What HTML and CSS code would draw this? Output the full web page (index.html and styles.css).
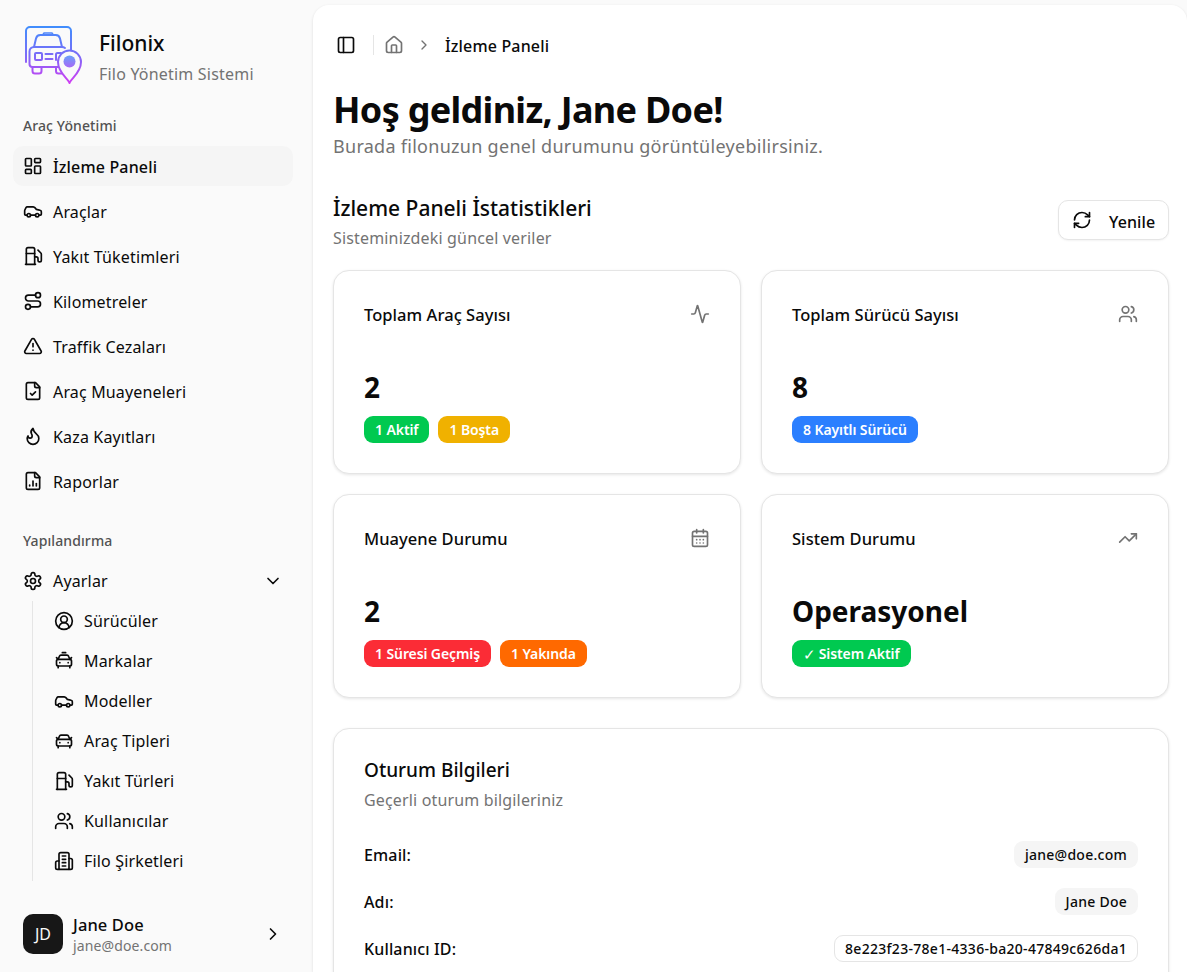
FILE: index.html
```html
<!DOCTYPE html>
<html lang="tr">
<head>
<meta charset="utf-8">
<title>Filonix</title>
<link rel="stylesheet" href="styles.css">
</head>
<body>
<svg class="sprite" width="0" height="0" aria-hidden="true">
  <defs>
    <symbol id="i-panel" viewBox="0 0 24 24"><rect x="3" y="3" width="18" height="18" rx="2"/><path d="M9 3v18"/></symbol>
    <symbol id="i-home" viewBox="0 0 24 24"><path d="M15 21v-8a1 1 0 0 0-1-1h-4a1 1 0 0 0-1 1v8"/><path d="M3 10a2 2 0 0 1 .709-1.528l7-5.999a2 2 0 0 1 2.582 0l7 5.999A2 2 0 0 1 21 10v9a2 2 0 0 1-2 2H5a2 2 0 0 1-2-2z"/></symbol>
    <symbol id="i-right" viewBox="0 0 24 24"><path d="m9 18 6-6-6-6"/></symbol>
    <symbol id="i-down" viewBox="0 0 24 24"><path d="m6 9 6 6 6-6"/></symbol>
    <symbol id="i-dash" viewBox="0 0 24 24"><rect x="3" y="3" width="7" height="9" rx="1"/><rect x="14" y="3" width="7" height="5" rx="1"/><rect x="14" y="12" width="7" height="9" rx="1"/><rect x="3" y="16" width="7" height="5" rx="1"/></symbol>
    <symbol id="i-car" viewBox="0 0 24 24"><path d="M19 17h2c.6 0 1-.4 1-1v-3c0-.9-.7-1.700-1.500-1.900C18.700 10.600 16 10 16 10s-1.300-1.400-2.200-2.300c-.5-.4-1.100-.7-1.800-.7H5c-.6 0-1.100.4-1.400.9l-1.400 2.900A3.700 3.700 0 0 0 2 12v4c0 .6.4 1 1 1h2"/><circle cx="7" cy="17" r="2"/><path d="M9 17h6"/><circle cx="17" cy="17" r="2"/></symbol>
    <symbol id="i-fuel" viewBox="0 0 24 24"><path d="M3 22h12"/><path d="M4 9h10"/><path d="M14 22V4a2 2 0 0 0-2-2H6a2 2 0 0 0-2 2v18"/><path d="M14 13h2a2 2 0 0 1 2 2v2a2 2 0 0 0 2 2a2 2 0 0 0 2-2V9.830a2 2 0 0 0-.59-1.420L18 5"/></symbol>
    <symbol id="i-route" viewBox="0 0 24 24"><circle cx="6" cy="19" r="3"/><path d="M9 19h8.500a3.500 3.500 0 0 0 0-7h-11a3.500 3.500 0 0 1 0-7H15"/><circle cx="18" cy="5" r="3"/></symbol>
    <symbol id="i-alert" viewBox="0 0 24 24"><path d="m21.730 18-8-14a2 2 0 0 0-3.480 0l-8 14A2 2 0 0 0 4 21h16a2 2 0 0 0 1.730-3"/><path d="M12 9v4"/><path d="M12 17h.01"/></symbol>
    <symbol id="i-filecheck" viewBox="0 0 24 24"><path d="M15 2H6a2 2 0 0 0-2 2v16a2 2 0 0 0 2 2h12a2 2 0 0 0 2-2V7Z"/><path d="M14 2v4a2 2 0 0 0 2 2h4"/><path d="m9 15 2 2 4-4"/></symbol>
    <symbol id="i-flame" viewBox="0 0 24 24"><path d="M8.500 14.500A2.500 2.500 0 0 0 11 12c0-1.380-.5-2-1-3-1.072-2.143-.224-4.054 2-6 .5 2.500 2 4.900 4 6.500 2 1.600 3 3.500 3 5.500a7 7 0 1 1-14 0c0-1.153.433-2.294 1-3a2.500 2.500 0 0 0 2.500 2.500z"/></symbol>
    <symbol id="i-filechart" viewBox="0 0 24 24"><path d="M15 2H6a2 2 0 0 0-2 2v16a2 2 0 0 0 2 2h12a2 2 0 0 0 2-2V7Z"/><path d="M14 2v4a2 2 0 0 0 2 2h4"/><path d="M8 18v-1"/><path d="M12 18v-6"/><path d="M16 18v-3"/></symbol>
    <symbol id="i-gear" viewBox="0 0 24 24"><path d="M12.220 2h-.44a2 2 0 0 0-2 2v.18a2 2 0 0 1-1 1.730l-.43.25a2 2 0 0 1-2 0l-.15-.08a2 2 0 0 0-2.730.73l-.22.38a2 2 0 0 0 .73 2.730l.15.1a2 2 0 0 1 1 1.720v.51a2 2 0 0 1-1 1.740l-.15.09a2 2 0 0 0-.73 2.730l.22.38a2 2 0 0 0 2.730.73l.15-.08a2 2 0 0 1 2 0l.43.25a2 2 0 0 1 1 1.730V20a2 2 0 0 0 2 2h.44a2 2 0 0 0 2-2v-.18a2 2 0 0 1 1-1.730l.43-.25a2 2 0 0 1 2 0l.15.08a2 2 0 0 0 2.730-.73l.22-.39a2 2 0 0 0-.73-2.730l-.15-.08a2 2 0 0 1-1-1.740v-.5a2 2 0 0 1 1-1.740l.15-.09a2 2 0 0 0 .73-2.730l-.22-.38a2 2 0 0 0-2.730-.73l-.15.08a2 2 0 0 1-2 0l-.43-.25a2 2 0 0 1-1-1.730V4a2 2 0 0 0-2-2z"/><circle cx="12" cy="12" r="3"/></symbol>
    <symbol id="i-usercircle" viewBox="0 0 24 24"><path d="M18 20a6 6 0 0 0-12 0"/><circle cx="12" cy="10" r="4"/><circle cx="12" cy="12" r="10"/></symbol>
    <symbol id="i-taxi" viewBox="0 0 24 24"><path d="M10 2h4"/><path d="m21 8-2 2-1.500-3.700A2 2 0 0 0 15.646 5H8.400a2 2 0 0 0-1.903 1.257L5 10 3 8"/><path d="M7 14h.01"/><path d="M17 14h.01"/><rect x="3" y="10" width="18" height="8" rx="2"/><path d="M5 18v2"/><path d="M19 18v2"/></symbol>
    <symbol id="i-carfront" viewBox="0 0 24 24"><path d="m21 8-2 2-1.500-3.700A2 2 0 0 0 15.646 5H8.400a2 2 0 0 0-1.903 1.257L5 10 3 8"/><path d="M7 14h.01"/><path d="M17 14h.01"/><rect x="3" y="10" width="18" height="8" rx="2"/><path d="M5 18v2"/><path d="M19 18v2"/></symbol>
    <symbol id="i-users" viewBox="0 0 24 24"><path d="M16 21v-2a4 4 0 0 0-4-4H6a4 4 0 0 0-4 4v2"/><path d="M16 3.128a4 4 0 0 1 0 7.744"/><path d="M22 21v-2a4 4 0 0 0-3-3.870"/><circle cx="9" cy="7" r="4"/></symbol>
    <symbol id="i-building" viewBox="0 0 24 24"><path d="M6 22V4a2 2 0 0 1 2-2h8a2 2 0 0 1 2 2v18Z"/><path d="M6 12H4a2 2 0 0 0-2 2v6a2 2 0 0 0 2 2h2"/><path d="M18 9h2a2 2 0 0 1 2 2v9a2 2 0 0 1-2 2h-2"/><path d="M10 6h4"/><path d="M10 10h4"/><path d="M10 14h4"/><path d="M10 18h4"/></symbol>
    <symbol id="i-activity" viewBox="0 0 24 24"><path d="M22 12h-2.480a2 2 0 0 0-1.930 1.460l-2.350 8.360a.25.25 0 0 1-.48 0L9.240 2.180a.25.25 0 0 0-.48 0l-2.350 8.360A2 2 0 0 1 4.490 12H2"/></symbol>
    <symbol id="i-calendar" viewBox="0 0 24 24"><path d="M8 2v4"/><path d="M16 2v4"/><rect x="3" y="4" width="18" height="18" rx="2"/><path d="M3 10h18"/><path d="M8 14h.01"/><path d="M12 14h.01"/><path d="M16 14h.01"/><path d="M8 18h.01"/><path d="M12 18h.01"/><path d="M16 18h.01"/></symbol>
    <symbol id="i-trend" viewBox="0 0 24 24"><path d="M16 7h6v6"/><path d="m22 7-8.500 8.500-5-5L2 17"/></symbol>
    <symbol id="i-refresh" viewBox="0 0 24 24"><path d="M3 12a9 9 0 0 1 9-9 9.750 9.750 0 0 1 6.740 2.740L21 8"/><path d="M21 3v5h-5"/><path d="M21 12a9 9 0 0 1-9 9 9.750 9.750 0 0 1-6.740-2.740L3 16"/><path d="M8 16H3v5"/></symbol>
  </defs>
</svg>

<div class="app">
  <aside class="sidebar">
    <header class="brand">
      <svg class="logo" viewBox="0 0 60 58" fill="none" aria-hidden="true">
        <defs>
          <linearGradient id="logo-grad" gradientUnits="userSpaceOnUse" x1="0" y1="0" x2="0" y2="58">
            <stop offset="0" stop-color="#3f8efc"/>
            <stop offset=".5" stop-color="#7a6cf8"/>
            <stop offset="1" stop-color="#d23cf2"/>
          </linearGradient>
          <linearGradient id="pin-grad" x1="0" y1="0" x2="0" y2="1">
            <stop offset="0" stop-color="#6aa0fa"/>
            <stop offset="1" stop-color="#a868f6"/>
          </linearGradient>
        </defs>
        <g stroke="url(#logo-grad)" stroke-width="2" stroke-linejoin="round" stroke-linecap="round">
          <path d="M2 36V5a4 4 0 0 1 4-4h37a4 4 0 0 1 4 4v19"/>
          <path d="M10 21l2-8.500A4.500 4.500 0 0 1 16.300 9h15.400a4.500 4.500 0 0 1 4.300 3.500L38 21"/>
          <path d="M19 8.500l1-1.500h8l1 1.500" stroke-width="1.500"/>
          <path d="M38 21H10a4.500 4.500 0 0 0-4.500 4.500V38A3 3 0 0 0 8.500 41H36M38 21a5 5 0 0 1 3 1"/>
          <rect x="11" y="27" width="7" height="7" rx="1"/>
          <path d="M21.500 28h7M21.500 33h7"/>
          <path d="M32 34V28.500a1.500 1.500 0 0 1 1.500-1.500H37"/>
          <path d="M8.500 41v4a2.500 2.500 0 0 0 2.500 2.500h4a2.500 2.500 0 0 0 2.500-2.500v-4"/>
          <path d="M32 41v4a2.500 2.500 0 0 0 2.500 2.500H38"/>
          <path d="M45.500 57c-1-4-11.500-10-11.500-21a11.500 11.500 0 0 1 23 0c0 11-10.500 17-11.500 21z" fill="#fafafa"/>
        </g>
        <circle cx="45.500" cy="35.500" r="6" fill="url(#pin-grad)"/>
      </svg>
      <div class="brand-text">
        <div class="brand-name">Filonix</div>
        <div class="brand-sub">Filo Yönetim Sistemi</div>
      </div>
    </header>

    <div class="group-label">Araç Yönetimi</div>
    <nav class="nav">
      <a class="nav-item active"><svg class="icon"><use href="#i-dash"/></svg><span>İzleme Paneli</span></a>
      <a class="nav-item"><svg class="icon"><use href="#i-car"/></svg><span>Araçlar</span></a>
      <a class="nav-item"><svg class="icon"><use href="#i-fuel"/></svg><span>Yakıt Tüketimleri</span></a>
      <a class="nav-item"><svg class="icon"><use href="#i-route"/></svg><span>Kilometreler</span></a>
      <a class="nav-item"><svg class="icon"><use href="#i-alert"/></svg><span>Traffik Cezaları</span></a>
      <a class="nav-item"><svg class="icon"><use href="#i-filecheck"/></svg><span>Araç Muayeneleri</span></a>
      <a class="nav-item"><svg class="icon"><use href="#i-flame"/></svg><span>Kaza Kayıtları</span></a>
      <a class="nav-item"><svg class="icon"><use href="#i-filechart"/></svg><span>Raporlar</span></a>
    </nav>

    <div class="group-label second">Yapılandırma</div>
    <div class="nav-item parent"><svg class="icon"><use href="#i-gear"/></svg><span>Ayarlar</span><svg class="icon chevron"><use href="#i-down"/></svg></div>
    <div class="subnav">
      <a class="sub-item"><svg class="icon"><use href="#i-usercircle"/></svg><span>Sürücüler</span></a>
      <a class="sub-item"><svg class="icon"><use href="#i-taxi"/></svg><span>Markalar</span></a>
      <a class="sub-item"><svg class="icon"><use href="#i-car"/></svg><span>Modeller</span></a>
      <a class="sub-item"><svg class="icon"><use href="#i-carfront"/></svg><span>Araç Tipleri</span></a>
      <a class="sub-item"><svg class="icon"><use href="#i-fuel"/></svg><span>Yakıt Türleri</span></a>
      <a class="sub-item"><svg class="icon"><use href="#i-users"/></svg><span>Kullanıcılar</span></a>
      <a class="sub-item"><svg class="icon"><use href="#i-building"/></svg><span>Filo Şirketleri</span></a>
    </div>

    <footer class="user">
      <div class="avatar">JD</div>
      <div class="user-text">
        <div class="user-name">Jane Doe</div>
        <div class="user-mail">jane@doe.com</div>
      </div>
      <svg class="icon chevron"><use href="#i-right"/></svg>
    </footer>
  </aside>

  <main class="main">
    <div class="crumbs">
      <svg class="icon"><use href="#i-panel"/></svg>
      <span class="crumb-sep"></span>
      <svg class="icon muted"><use href="#i-home"/></svg>
      <svg class="icon small muted crumb-arrow"><use href="#i-right"/></svg>
      <span class="crumb-current">İzleme Paneli</span>
    </div>

    <h1 class="title">Hoş geldiniz, Jane Doe!</h1>
    <p class="subtitle">Burada filonuzun genel durumunu görüntüleyebilirsiniz.</p>

    <div class="section-head">
      <div>
        <h2 class="section-title">İzleme Paneli İstatistikleri</h2>
        <p class="section-sub">Sisteminizdeki güncel veriler</p>
      </div>
      <button class="refresh"><svg class="icon"><use href="#i-refresh"/></svg><span>Yenile</span></button>
    </div>

    <div class="stats">
      <section class="card">
        <div class="card-head"><h3>Toplam Araç Sayısı</h3><svg class="icon muted"><use href="#i-activity"/></svg></div>
        <div class="value">2</div>
        <div class="badges"><span class="badge green">1 Aktif</span><span class="badge yellow">1 Boşta</span></div>
      </section>
      <section class="card">
        <div class="card-head"><h3>Toplam Sürücü Sayısı</h3><svg class="icon muted"><use href="#i-users"/></svg></div>
        <div class="value">8</div>
        <div class="badges"><span class="badge blue">8 Kayıtlı Sürücü</span></div>
      </section>
      <section class="card">
        <div class="card-head"><h3>Muayene Durumu</h3><svg class="icon muted"><use href="#i-calendar"/></svg></div>
        <div class="value">2</div>
        <div class="badges"><span class="badge red">1 Süresi Geçmiş</span><span class="badge orange">1 Yakında</span></div>
      </section>
      <section class="card">
        <div class="card-head"><h3>Sistem Durumu</h3><svg class="icon muted"><use href="#i-trend"/></svg></div>
        <div class="value">Operasyonel</div>
        <div class="badges"><span class="badge green"><span class="tick">✓</span> Sistem Aktif</span></div>
      </section>
    </div>

    <section class="card session">
      <h3 class="session-title">Oturum Bilgileri</h3>
      <p class="session-sub">Geçerli oturum bilgileriniz</p>
      <div class="rows">
        <div class="row"><span class="row-label">Email:</span><span class="pill">jane@doe.com</span></div>
        <div class="row"><span class="row-label">Adı:</span><span class="pill">Jane Doe</span></div>
        <div class="row"><span class="row-label">Kullanıcı ID:</span><span class="pill outline">8e223f23-78e1-4336-ba20-47849c626da1</span></div>
      </div>
    </section>
  </main>
</div>
</body>
</html>
```

FILE: styles.css
```css
* { box-sizing: border-box; }
html, body { height: 100%; margin: 0; overflow: hidden; }
body {
  font-family: "Noto Sans", "Open Sans", sans-serif;
  color: #0a0a0a;
  background: #fafafa;
  font-size: 16px;
}
.sprite { position: absolute; }
h1, h2, h3, p { margin: 0; font-weight: inherit; }

.icon {
  width: 20px;
  height: 20px;
  flex: none;
  fill: none;
  stroke: currentColor;
  stroke-width: 2;
  stroke-linecap: round;
  stroke-linejoin: round;
}
.icon.small { width: 16px; height: 16px; }
.icon.muted { color: #737373; }

.app { display: flex; height: 972px; }

/* Sidebar */
.sidebar {
  width: 313px;
  flex: none;
  display: flex;
  flex-direction: column;
  padding: 26px 20px 18px 13px;
}
.brand { display: flex; align-items: center; padding-left: 11px; gap: 15px; height: 58px; }
.logo { width: 60px; height: 58px; flex: none; }
.brand-name { font-size: 21px; font-weight: 500; line-height: 30px; margin-top: 3px; }
.brand-sub { font-size: 16px; color: #737373; line-height: 24px; margin-top: 4px; letter-spacing: .2px; }

.group-label { font-size: 14px; font-weight: 500; color: #525252; padding-left: 10px; margin-top: 32px; line-height: 20px; letter-spacing: .1px; }
.group-label.second { margin-top: 30px; }
.nav { display: flex; flex-direction: column; gap: 5px; margin-top: 10px; }
.nav-item {
  display: flex;
  align-items: center;
  gap: 10px;
  height: 40px;
  padding: 0 10px;
  border-radius: 10px;
  font-size: 16px;
  letter-spacing: .16px;
}
.nav > .nav-item > span { padding-top: 2px; }
.nav-item.active { background: #f5f5f5; font-weight: 500; }
.nav-item.parent { margin-top: 10px; }
.chevron { margin-left: auto; }
.subnav {
  display: flex;
  flex-direction: column;
  margin-left: 19px;
  border-left: 1px solid #e5e5e5;
  padding-left: 21px;
}
.sub-item { display: flex; align-items: center; gap: 10px; height: 40px; font-size: 16px; letter-spacing: .16px; }

.user { display: flex; align-items: center; gap: 10px; height: 40px; padding: 0 10px; margin-top: auto; }
.avatar {
  width: 40px;
  height: 40px;
  border-radius: 10px;
  background: #171717;
  color: #fafafa;
  display: flex;
  align-items: center;
  justify-content: center;
  font-size: 16px;
}
.user-text { padding-top: 2px; }
.user-name { font-size: 16.500px; font-weight: 500; line-height: 22px; letter-spacing: .1px; }
.user-mail { font-size: 14px; color: #737373; line-height: 20px; letter-spacing: .12px; }

/* Main */
.main {
  flex: 1;
  min-width: 0;
  margin-top: 5px;
  background: #fff;
  border-radius: 16px 16px 0 0;
  box-shadow: 0 1px 3px rgba(0, 0, 0, .12);
  padding: 20px 18px 0 20px;
}
.crumbs { display: flex; align-items: center; height: 40px; padding-left: 3px; }
.crumb-sep { width: 1px; height: 20px; background: #e5e5e5; margin: 0 10px 0 17px; }
.crumb-arrow { margin: 0 13px 0 12px; }
.crumb-current { font-size: 16px; font-weight: 500; letter-spacing: .16px; padding-top: 1px; }

.title { font-size: 36px; font-weight: 700; line-height: 44px; margin-top: 23px; letter-spacing: -.7px; }
.subtitle { font-size: 18px; color: #737373; line-height: 24px; margin-top: 2px; letter-spacing: .28px; }

.section-head { display: flex; justify-content: space-between; align-items: flex-start; margin-top: 35px; }
.section-title { font-size: 21px; font-weight: 500; line-height: 30px; }
.section-sub { font-size: 16px; color: #737373; line-height: 24px; margin-top: 3px; letter-spacing: .16px; }
.refresh {
  display: flex;
  align-items: center;
  gap: 17px;
  height: 40px;
  width: 111px;
  margin-top: 7px;
  padding: 0 12px 0 13px;
  background: #fff;
  border: 1px solid #e5e5e5;
  border-radius: 10px;
  box-shadow: 0 1px 2px rgba(0, 0, 0, .05);
  font: 500 16px "Noto Sans", sans-serif;
  color: #0a0a0a;
  letter-spacing: .1px;
}
.refresh span { padding-top: 3px; }

.stats { display: grid; grid-template-columns: 1fr 1fr; gap: 20px; margin-top: 20px; }
.card {
  background: #fff;
  border: 1px solid #e5e5e5;
  border-radius: 16px;
  box-shadow: 0 1px 3px rgba(0, 0, 0, .1);
  padding: 30px;
}
.stats .card { height: 204px; }
.card-head { display: flex; justify-content: space-between; align-items: center; height: 28px; }
.card-head h3 { font-size: 16.500px; font-weight: 500; letter-spacing: .05px; margin-bottom: 2px; }
.card-head .icon { margin-bottom: 3px; }
.value { font-size: 28px; font-weight: 700; line-height: 40px; margin-top: 38px; }
.badges { display: flex; gap: 9px; margin-top: 9px; }
.badge {
  display: inline-flex;
  align-items: center;
  gap: .2em;
  height: 27px;
  padding: 0 11px;
  border-radius: 9px;
  color: #fff;
  font-size: 14px;
  font-weight: 600;
  letter-spacing: -.1px;
}
.tick { font-weight: 400; font-size: 15px; }
.green { background: #00c950; }
.yellow { background: #f0b100; }
.blue { background: #2b7fff; }
.red { background: #fb2c36; }
.orange { background: #ff6900; }

.session { margin-top: 30px; height: 400px; }
.session-title { font-size: 19px; font-weight: 500; line-height: 24px; margin-top: -1px; }
.session-sub { font-size: 16px; color: #737373; line-height: 24px; margin-top: 6px; letter-spacing: .16px; }
.rows { display: flex; flex-direction: column; gap: 20px; margin-top: 29px; }
.row { display: flex; justify-content: space-between; align-items: center; height: 27px; }
.row-label { font-size: 16px; font-weight: 500; letter-spacing: .14px; }
.pill {
  display: inline-flex;
  align-items: center;
  height: 27px;
  padding: 0 11px;
  border-radius: 9px;
  background: #f5f5f5;
  font-size: 14px;
  font-weight: 500;
  letter-spacing: .26px;
}
.pill.outline { background: #fff; border: 1px solid #e5e5e5; padding: 0 10px; letter-spacing: .29px; }
```
